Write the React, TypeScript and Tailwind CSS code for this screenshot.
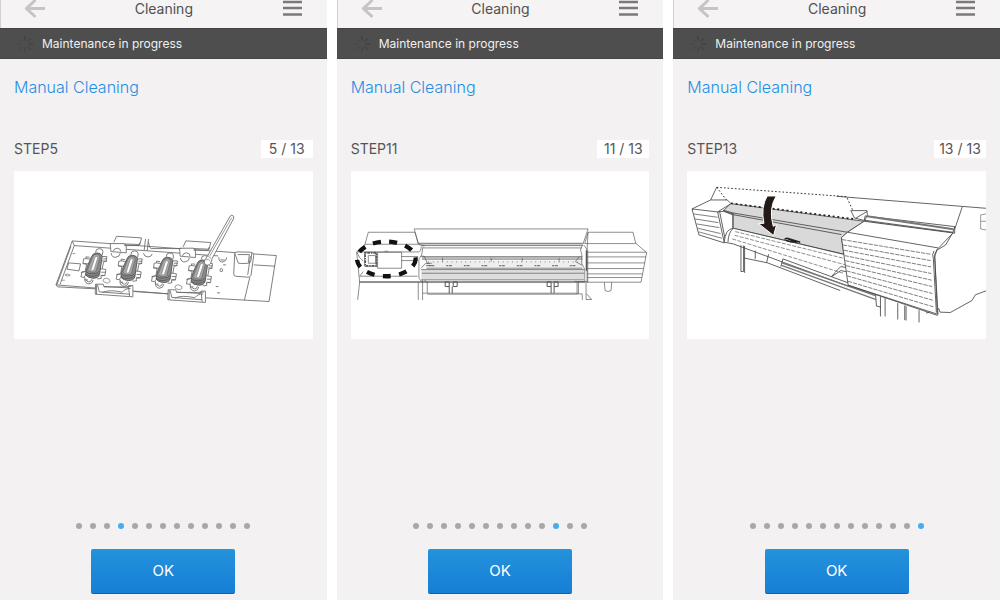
import type { ReactNode } from "react";

const TOTAL = 13;

const screens = [
  { step: 5, dot: 3, label: "Cleaning tray with swab", art: <TrayArt /> },
  { step: 11, dot: 10, label: "Printer front view", art: <FrontArt /> },
  { step: 13, dot: 12, label: "Closing the front cover", art: <CoverArt /> },
];

export default function App() {
  return (
    <main className="grid min-h-screen grid-cols-3 gap-2.5 bg-white font-['Inter',sans-serif]">
      {screens.map((s) => (
        <Screen key={s.step} step={s.step} dot={s.dot} label={s.label}>
          {s.art}
        </Screen>
      ))}
    </main>
  );
}

type ScreenProps = { step: number; dot: number; label: string; children: ReactNode };

function Screen({ step, dot, label, children }: ScreenProps) {
  return (
    <section className="flex min-w-0 flex-col bg-[#f3f1f2] text-[#555]">
      <header className="flex h-7 items-center justify-between border-l border-[#d2d0d1] bg-[#f5f3f4] pr-6 pb-2.5 pl-6">
        <button type="button" aria-label="Back" className="w-5">
          <svg viewBox="0 0 20 20" className="block h-5 w-5" fill="none" stroke="#c6c4c5" strokeWidth="3">
            <path d="M20 9.500H2M10.500 1L1.500 9.500l9 8.500" />
          </svg>
        </button>
        <h1 className="text-sm text-[#505050]">Cleaning</h1>
        <button type="button" aria-label="Menu" className="w-5">
          <svg viewBox="0 0 20 20" className="block h-5 w-5" stroke="#7d797a" strokeWidth="2.400">
            <path d="M0 3h19M0 9h19M0 15.500h19" />
          </svg>
        </button>
      </header>

      <div className="flex h-[31px] items-center gap-2 border-y border-[#444] bg-[#4e4e4e] pl-4 text-xs text-[#f0f0f0]">
        <Spinner />
        <p>Maintenance in progress</p>
      </div>

      <div className="flex flex-1 flex-col px-3.5 pt-4 pb-1.5">
        <h2 className="text-base font-light text-[#1f8ee4]">Manual Cleaning</h2>
        <div className="mt-10 mb-3 flex items-center justify-between text-sm">
          <p>STEP{step}</p>
          <p className="w-[52px] bg-white text-center leading-[18px]">
            {step} / {TOTAL}
          </p>
        </div>
        <figure aria-label={label} className="bg-white">
          {children}
        </figure>

        <div className="mt-auto mb-5 flex justify-center gap-2">
          {Array.from({ length: TOTAL }, (_, i) => (
            <span
              key={i}
              className={i === dot ? "h-1.5 w-1.5 rounded-full bg-[#43aeee]" : "h-1.5 w-1.5 rounded-full bg-[#a9a7a8]"}
            />
          ))}
        </div>
        <button
          type="button"
          className="h-[45px] w-36 self-center rounded-xs border-b border-[#11609f] bg-gradient-to-b from-[#2492dc] to-[#167fd5] text-[15px] text-white"
        >
          OK
        </button>
      </div>
    </section>
  );
}

function Spinner() {
  return (
    <svg viewBox="0 0 18 18" className="h-[18px] w-[18px]" stroke="#434343" strokeWidth="1.500" strokeLinecap="round">
      {[0, 45, 90, 135, 180, 225, 270, 315].map((a, i) => (
        <path key={a} d="M9 5V1.500" transform={`rotate(${a} 9 9)`} opacity={1 - i * 0.1} />
      ))}
    </svg>
  );
}

/* rubber cap with its four clips */
function Cap({ x, y }: { x: number; y: number }) {
  return (
    <g transform={`translate(${x} ${y})`}>
      <path d="M4 -40q0 -12 11 -12t11 9l-2 11M-29 40q2 14 13 14t13 -12M-25 40q2 8 9 8t9 -8" fill="#fff" />
      <path
        d="M-14 -26l-11 -1v5l-7 1l-2 14l11 2l-4 22l-10 1l-3 15l12 2v7h9M24 -28h14l-2 14l-8 2l-4 21l11 2l-3 18l-12 1l1 8l-12 1"
        fill="#fff"
      />
      <path d="M-25 -22l14 2M-34 -7l18 1M-27 17l-13 3M-31 33l10 -9M38 -14l-14 -1M27 -21h11M24 9l-8 -1M21 19h13M32 29l-12 -1" />
      <path
        d="M-8 -28Q-4 -39 8 -39T24 -29L16 26Q12 38 -4 37T-26 27Q-26 14 -20 -1z"
        fill="#8b8b8b"
        stroke="#4c4c4c"
      />
      <path d="M-5 -27Q0 -36 8 -35T17 -27L6 15Q2 20 -7 19T-20 12z" fill="#aaa" strokeWidth="2" />
      <path d="M2 -26Q6 -31 11 -26L-1 12Q-6 17 -10 12z" fill="#fff" strokeWidth="1.500" />
      <path d="M-24 17Q-20 25 -4 24T15 16M-25 24Q-20 32 -4 31T15 23" stroke="#444" strokeWidth="2" />
    </g>
  );
}

function TrayArt() {
  return (
    <svg
      viewBox="-78 -102 897 504"
      className="block w-full"
      fill="none"
      stroke="#666"
      strokeWidth="2.500"
      strokeLinejoin="round"
    >
      <path d="M97 108L710 152L688 290L497 279L385 267L48 240z" fill="#fff" />
      <path d="M103 122L535 153M103 122L60 239M93 124L51 239M97 108L103 122M48 240L53 246L167 252M282 260L388 267M642 180L706 184M630 218L614 286" />
      {/* upper brackets */}
      {[0, 208].map((dx) => (
        <g key={dx} transform={`translate(${dx} ${dx / 15})`}>
          <path d="M222 112L230 94L305 99L300 119L253 117M211 116h42l6 7v21l-46 -4z" fill="#fff" />
          <path d="M220 139q2 -9 12 -9t11 10M214 145q2 14 14 12t13 -12M253 122h44l3 -9" />
        </g>
      ))}
      <path d="M313 136l4 -34M322 138l4 -36M326 111q3 20 8 20h90M311 145q2 11 13 11t13 -9" />
      <path d="M86 174l36 3l-5 21l-36 -5z" />
      <path d="M75 210q9 -6 16 1q-7 6 -16 -1M65 226h10M98 146h8M189 228q1 -9 11 -8t11 10q-9 10 -22 -2M405 248q1 -9 11 -8t11 10q-9 10 -22 -2" strokeWidth="2" />
      <Cap x={163} y={183} />
      <Cap x={269} y={190} />
      <Cap x={375} y={196} />
      <Cap x={480} y={204} />
      {/* lower brackets */}
      {[0, 218].map((dx) => (
        <g key={dx} transform={`translate(${dx} ${dx / 13})`}>
          <path d="M167 238h23l2 7l71 4l3 -7h13v34l-113 -8z" fill="#fff" />
          <path d="M173 240l5 21l91 7M192 246h62l20 -1M187 263q22 -10 60 -1q9 -12 25 -11M170 268v-29M266 244l3 30" />
        </g>
      ))}
      {/* side cup */}
      <path d="M585 146q2 -6 10 -5l39 1q8 1 8 10l-8 59q-2 6 -9 6l-38 -3q-6 -1 -5 -8z" fill="#fff" />
      <path d="M585 146l5 12l5 16q1 3 31 1q7 0 8 -9l2 -22M594 149h35l-3 24M632 154l-8 56" />
      <path d="M537 157q0 16 13 14q10 -2 11 -13M542 165h13M541 193q9 -6 7 6q-9 4 -7 -6M528 245h8M532 264h9M550 180h9" />
      {/* swab */}
      <path d="M571 34q5 -6 11 0l-1 8L517 161q-2 18 -13 20q-13 0 -9 -15l9 -14z" fill="#fff" />
      <path d="M576 38L510 153M504 152l10 9M499 165q7 -6 13 4" strokeWidth="2" />
    </svg>
  );
}

function FrontArt() {
  return (
    <svg viewBox="3 -147 897 504" className="block w-full" fill="none" stroke="#555" strokeWidth="2">
      {/* hood */}
      <path d="M193 27H715L700 72H205z" fill="#fff" />
      <path d="M205 71h495v6H205z" fill="#ccc" stroke="none" />
      <path d="M205 70h495M214 77h486M220 84h476M216 110h482M216 114h482M216 118h482" />
      {/* platen and rail */}
      <path d="M228 122h470v24H228z" fill="#eee" stroke="none" />
      <path d="M235 126h460" strokeDasharray="2 12" strokeWidth="3" />
      <path d="M278 114v11M424 114v11M517 114v11M628 114v11" />
      <path d="M236 137h458" strokeDasharray="6 2 9 36" strokeWidth="4" stroke="#777" />
      <path d="M214 149h489v31H214z" fill="#ddd" stroke="none" />
      <path d="M230 145h468M214 149h490M216 160h488M214 180h488M28 185h679M28 188h679" />
      {/* left pod */}
      <path d="M45 73L55 37h140l11 36l18 5M45 73L20 96L29 187l-6 53M45 73h160M22 96h183q8 0 9 -16M29 169h174M40 155l-11 14M205 187v53M218 180v61M223 181l9 6v33h-14M20 96q8 20 20 28" />
      <path d="M219 80l-4 27l-8 10v58l9 11M211 109h12l9 21h14M214 145l12 -14h14M228 137h18" />
      <path d="M83 97h72v48H83zM155 110h50M155 122h50M44 97h36v42H44zM55 107h22v23H55zM104 94h10" />
      <path d="M45 99h34v39H46z" strokeWidth="5" strokeDasharray="4 3 8 3" />
      <ellipse cx="109" cy="117" rx="88" ry="52" stroke="#111" strokeWidth="13" strokeDasharray="24 25" />
      {/* right pod */}
      <path d="M715 37h135l8 33l33 28l-17 89H712V91z" fill="#fff" />
      <path d="M715 37l-10 34h153M702 75l11 15M713 97h177M713 111h176M713 129h173M713 146h169M713 162h166M713 173h163M714 91v98" />
      <path d="M697 77q-9 13 -1 25v29l9 17v37M689 110l-12 15l20 11M673 185h39" />
      <path d="M710 91v62" strokeWidth="4" />
      {/* stand */}
      <path d="M232 220h451M232 223h451M682 187v35h15l1 18M686 187v35M709 185v54h17l-15 -17M764 187l2 25q9 6 18 0l2 -25" />
      <path d="M286 186h12v14h-12zM310 186h12v14h-12zM298 200v20M307 200v20M592 186h12v14h-12zM613 186h12v14h-12zM604 200v20M613 200v20" strokeWidth="3" />
    </svg>
  );
}

function CoverArt() {
  return (
    <svg viewBox="6 3 897 504" className="block w-full" fill="none" stroke="#444" strokeWidth="2.500">
      {/* back of the body */}
      <path d="M455 79L904 115M833 110l-23 68M904 363l-32 12l-10 17l-65 36l-31 -1l-4 -11l-38 14" />
      <path d="M904 132l-16 3v42l16 3M888 154h16" stroke="#888" />
      {/* window */}
      <path d="M137 101L538 154L488 187L470 203L477 253L144 175V132l-29 -9z" fill="#d9d9d9" />
      <path d="M115 121l29 8L488 187M144 129V175M144 134L470 194" />
      {/* cover when open */}
      <path d="M95 52L485 80L514 143M95 52l37 48" stroke="#333" strokeWidth="3" strokeDasharray="5 6" />
      <path d="M138 100L514 148" stroke="#222" strokeWidth="5" strokeDasharray="6 8" />
      {/* left box */}
      <path d="M21 117L77 90h50l11 11l-40 25l20 93l-76 -24z" fill="#fff" />
      <path d="M98 126L21 117M95 52L77 90M104 125l18 90l23 -4M98 126l18 -2l26 10" />
      <path d="M26 132l72 10M30 147l70 11M35 162l68 11M39 175l68 16M42 186l69 19" stroke="#666" />
      {/* roller */}
      <path d="M118 217Q120 178 145 175L486 257l7 92L145 222z" fill="#fff" stroke="none" />
      <path d="M118 217Q120 178 145 175L480 254M145 175q-15 13 -16 42M118 217l27 5L493 350" />
      <path d="M151 185L484 267M149 196L483 285M142 207L475 310" stroke="#777" strokeDasharray="12 4" />
      {/* rails below */}
      <path d="M168 226v79h8v-78M179 228v81M211 242v25M251 253l-6 26M176 264l72 15L466 362M294 267l-6 23M294 267l278 102l3 40l12 2v29" />
      <path d="M289 278L574 378M288 286L574 389" stroke="#777" strokeWidth="4" />
      <path d="M450 308l18 -18l17 3M441 320l27 -18l18 4M450 309l-10 11" />
      {/* top rail */}
      <path d="M498 122h48l2 12l-8 18l-31 -8zM514 144l34 -20M541 138L810 170v20L538 154z" fill="#fff" />
      <path d="M546 139L806 178" stroke="#777" strokeWidth="6" />
      <path d="M540 151L805 187l-22 38l-23 14M810 170l-5 17" />
      {/* main right box */}
      <path d="M538 154L805 189L758 238l-8 20l8 175L490 346L470 203L488 187z" fill="#fff" />
      <path d="M488 187L760 234M748 243q-7 9 -2 25l9 160M758 238q-10 15 -8 24l10 173M490 346L759 437" />
      <path
        d="M472 209L737 253M474 225L738 272M477 241L739 291M479 257L740 311M481 272L741 331M483 287L742 350M485 303L743 371M487 318L744 391M489 334L746 411"
        stroke="#666"
        strokeDasharray="13 3"
      />
      {/* legs */}
      <path d="M587 380v35M601 383v57M639 400v49M660 407v44M664 409v43M703 421v37" />
      {/* handle and arrow */}
      <path d="M299 209q3 -6 13 -3l34 11M303 211l14 5h23M307 206l28 12" stroke="#222" strokeWidth="4" />
      <path d="M247 78h27q-24 39 -9 91l10 -5l-9 33l-45 -36l16 -1q-10 -48 10 -82z" fill="#241b19" stroke="#fff" strokeWidth="3" />
    </svg>
  );
}
